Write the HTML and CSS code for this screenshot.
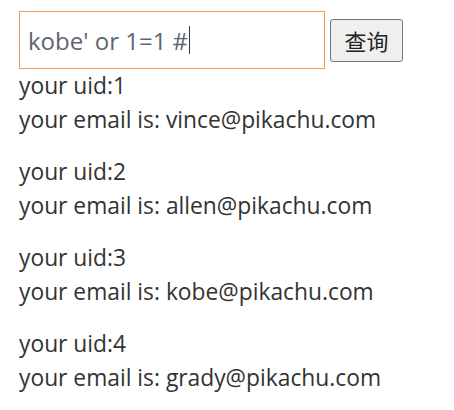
FILE: index.html
```html
<!DOCTYPE html>
<html>
<head>
<meta charset="utf-8">
<link rel="stylesheet" href="styles.css">
</head>
<body>
<form class="search">
  <div class="field"><span class="value">kobe' or 1=1 #</span><span class="caret"></span></div>
  <button type="button" class="btn">查询</button>
</form>
<div class="results">
  <p class="row">your uid:1<br>your email is: vince@pikachu.com</p>
  <p class="row">your uid:2<br>your email is: allen@pikachu.com</p>
  <p class="row">your uid:3<br>your email is: kobe@pikachu.com</p>
  <p class="row">your uid:4<br>your email is: grady@pikachu.com</p>
</div>
</body>
</html>
```
FILE: styles.css
```css
html, body {
  margin: 0;
  background: #fff;
}
body {
  padding: 11px 19px 0;
  font-family: "Open Sans", "Noto Sans CJK SC", sans-serif;
  color: #333;
  font-size: 22.8px;
}
.search {
  display: flex;
  align-items: center;
  gap: 5px;
  margin: 0;
}
.field {
  box-sizing: border-box;
  width: 306px;
  height: 58px;
  border: 1px solid #e8a05a;
  display: flex;
  align-items: center;
  padding-left: 8px;
  font-size: 24px;
  color: #5d6472;
}
.caret {
  display: inline-block;
  width: 1px;
  height: 28px;
  background: #333;
  margin-left: 1px;
}
.btn {
  box-sizing: border-box;
  width: 73px;
  height: 43px;
  border: 1px solid #767676;
  border-radius: 3px;
  background: #efefef;
  font-family: "Noto Sans CJK SC", sans-serif;
  font-size: 22px;
  color: #222;
  padding: 0;
}
.results {
  margin-top: 0;
}
.row {
  margin: 0 0 18px;
  line-height: 34px;
}
```
